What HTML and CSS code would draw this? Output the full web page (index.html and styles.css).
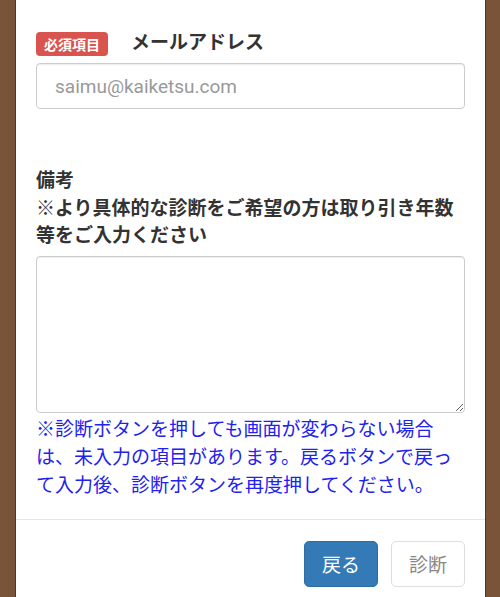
FILE: index.html
```html
<!DOCTYPE html>
<html lang="ja">
<head>
    <meta charset="UTF-8">
    <meta name="viewport" content="width=device-width, initial-scale=1.0">
    <title>診断フォーム</title>
    <link rel="stylesheet" href="styles.css">
</head>
<body>
    <div class="modal">
        <div class="modal__body">
            <div class="form__group">
                <div class="form__label">
                    <span class="badge">必須項目</span>
                    <span class="label__text">メールアドレス</span>
                </div>
                <input type="email" class="form__input" placeholder="saimu@kaiketsu.com">
            </div>

            <div class="form__group form__group--note">
                <label class="note__label" for="biko">備考<br>※より具体的な診断をご希望の方は取り引き年数等をご入力ください</label>
                <textarea id="biko" class="form__textarea"></textarea>
                <p class="help__text">※診断ボタンを押しても画面が変わらない場合は、未入力の項目があります。戻るボタンで戻って入力後、診断ボタンを再度押してください。</p>
            </div>
        </div>
        <div class="modal__footer">
            <button type="button" class="btn btn--primary">戻る</button>
            <button type="button" class="btn btn--default">診断</button>
        </div>
    </div>
</body>
</html>
```

FILE: styles.css
```css
body {
    margin: 0;
    background-color: #7a5438;
    font-family: "Noto Sans CJK JP", "Noto Sans", sans-serif;
    color: #333;
}

.modal {
    margin: 0 14px 0 15px;
    background-color: #fff;
    border-left: 1px solid #4f3523;
    border-right: 1px solid #4f3523;
    min-height: 597px;
    box-sizing: border-box;
}

.modal__body {
    padding: 32px 20px 21px 20px;
}

.form__label {
    display: flex;
    align-items: flex-start;
    gap: 23px;
    margin-bottom: 7px;
}

.badge {
    background-color: #d9534f;
    color: #fff;
    font-size: 14px;
    font-weight: bold;
    line-height: 24px;
    padding: 0 8px;
    border-radius: 4px;
}

.label__text {
    font-size: 19px;
    font-weight: bold;
    line-height: 18px;
}

.form__input {
    display: block;
    width: 100%;
    height: 46px;
    box-sizing: border-box;
    border: 1px solid #ccc;
    border-radius: 4px;
    padding: 0 18px;
    font-family: Roboto, "Noto Sans", sans-serif;
    font-size: 19px;
    box-shadow: inset 0 1px 1px rgba(0, 0, 0, 0.075);
}

.form__input::placeholder {
    color: #999;
}

.form__group--note {
    margin-top: 58px;
}

.note__label {
    display: block;
    font-size: 19px;
    font-weight: bold;
    line-height: 27.5px;
    margin-top: -2px;
    margin-bottom: 8px;
}

.form__textarea {
    display: block;
    width: 100%;
    height: 157px;
    box-sizing: border-box;
    border: 1px solid #ccc;
    border-radius: 4px;
    box-shadow: inset 0 1px 1px rgba(0, 0, 0, 0.075);
    margin: 0;
}

.help__text {
    margin: 1px 0 0 0;
    color: #2222ee;
    font-size: 19px;
    line-height: 28px;
}

.modal__footer {
    border-top: 1px solid #e5e5e5;
    padding: 21px 20px;
    display: flex;
    justify-content: flex-end;
    gap: 13px;
}

.btn {
    width: 74px;
    height: 46px;
    border-radius: 5px;
    font-family: "Noto Sans CJK JP", sans-serif;
    font-size: 19px;
    cursor: pointer;
}

.btn--primary {
    background-color: #337ab7;
    border: 1px solid #2e6da4;
    color: #fff;
}

.btn--default {
    background-color: #fff;
    border: 1px solid #ddd;
    color: #888;
}
```
